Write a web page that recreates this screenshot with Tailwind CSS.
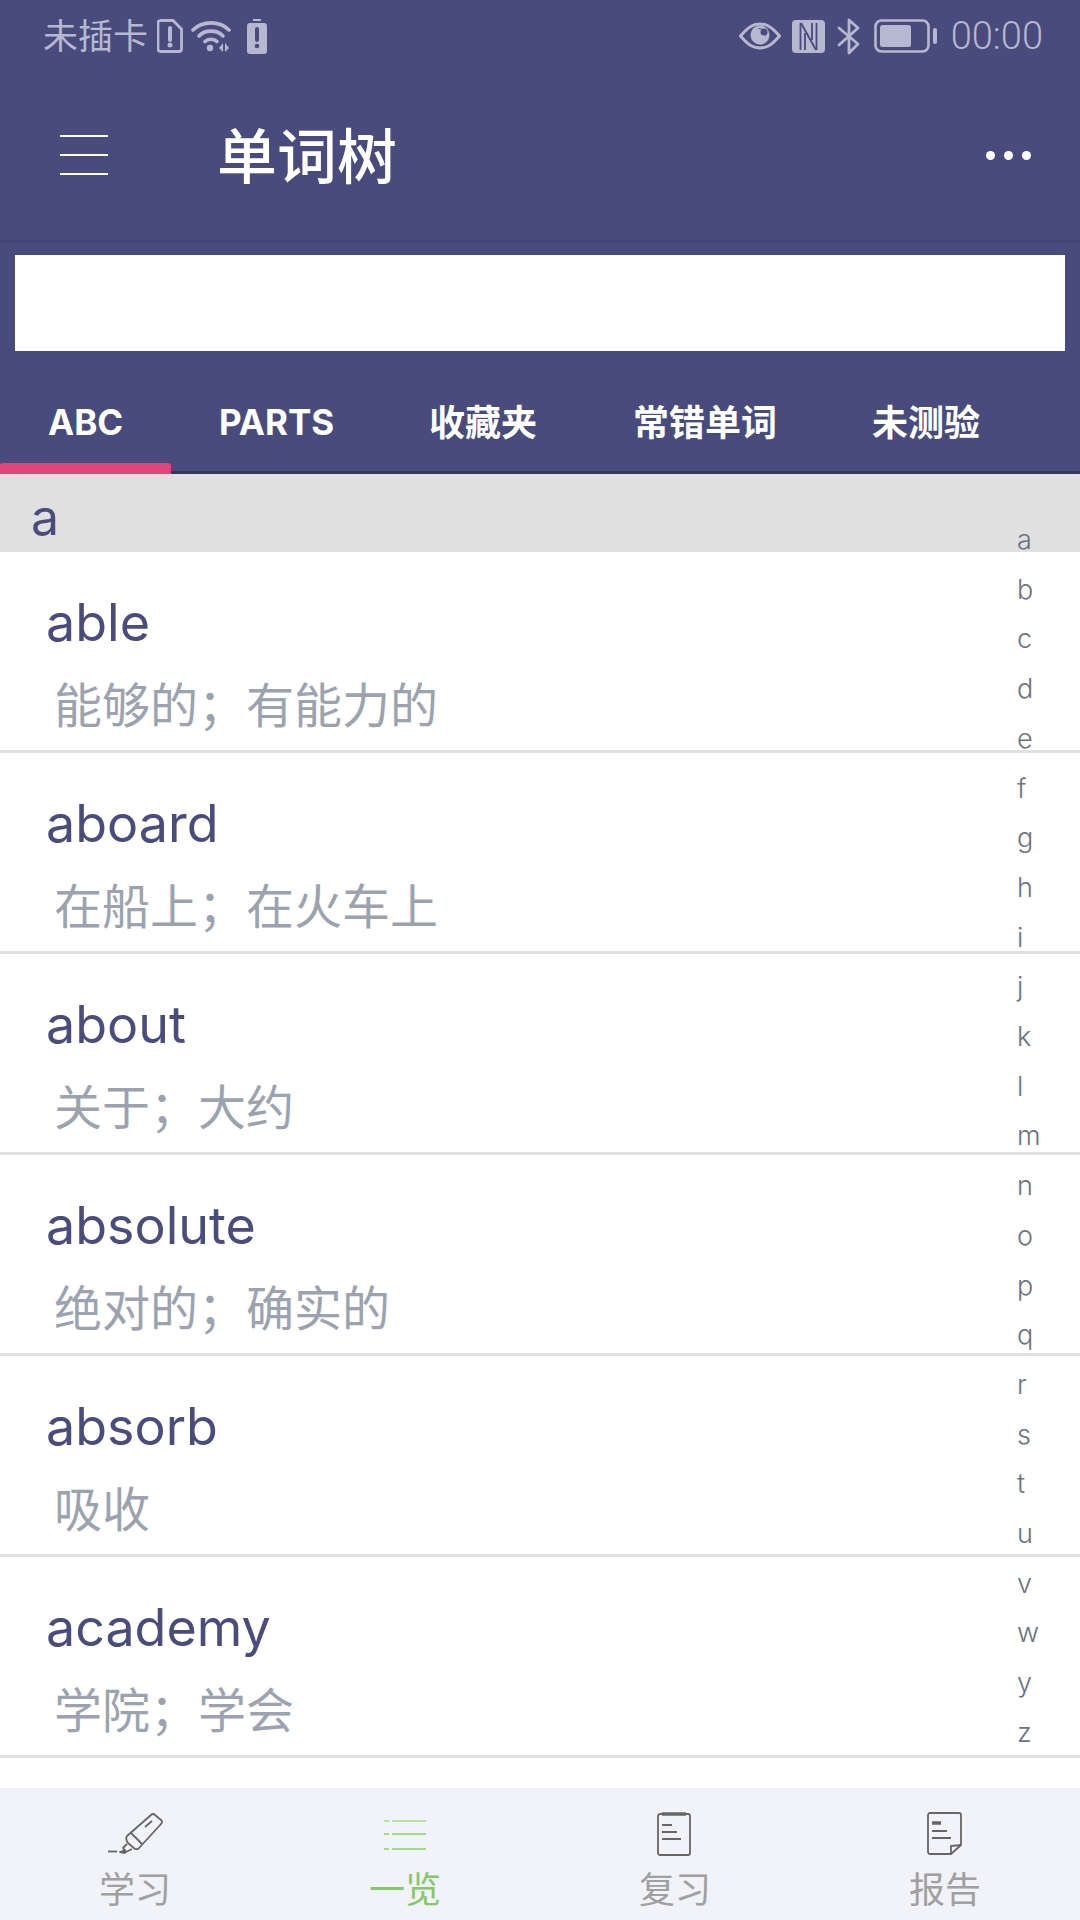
<!DOCTYPE html>
<html><head><meta charset="utf-8"><script src="https://cdn.jsdelivr.net/npm/@tailwindcss/browser@4"></script></head>
<body class="m-0">
<div class="relative w-[1080px] h-[1920px] flex flex-col overflow-hidden bg-white font-['Inter','Noto_Sans_CJK_SC',sans-serif]">
  <div class="bg-[#484b7c] h-[474px] shrink-0 flex flex-col">
    <div class="h-[72px] flex items-center justify-between pl-[43px] pr-[37px] text-[#b6b8cf]">
      <div class="flex items-center">
        <span class="text-[35px] leading-none">未插卡</span>
        <svg class="ml-[9px]" width="26" height="34" viewBox="0 0 26 34" fill="none"><path d="M3 1.500H16L24.500 10V30a2.500 2.500 0 0 1-2.500 2.500H3.500A2.500 2.500 0 0 1 1 30V4a2.500 2.500 0 0 1 2-2.500Z" stroke="currentColor" stroke-width="2.800"/><path d="M13 9v12" stroke="currentColor" stroke-width="4" stroke-linecap="round"/><circle cx="13" cy="26" r="2.500" fill="currentColor"/></svg>
        <svg class="ml-[8px]" width="40" height="34" viewBox="0 0 40 34" fill="none" stroke="currentColor" stroke-linecap="round"><path d="M2 11C11 1.500 29 1.500 38 11" stroke-width="3.600"/><path d="M8 17C14 10.500 26 10.500 32 17" stroke-width="3.600"/><path d="M14 22.500C17 19.500 23 19.500 26 22.500" stroke-width="3.600"/><circle cx="19" cy="29" r="3.200" fill="currentColor" stroke="none"/><path d="M29 30l4-5v9zM35 25l4 5-4 4z" fill="currentColor" stroke="none" transform="translate(-1 -1)"/></svg>
        <svg class="ml-[16px]" width="20" height="35" viewBox="0 0 20 35"><path d="M6 0h8v2H6z" fill="currentColor"/><rect y="4" width="20" height="31" rx="3" fill="currentColor"/><path d="M10 10v11" stroke="#484b7c" stroke-width="4" stroke-linecap="round"/><circle cx="10" cy="27" r="2.300" fill="#484b7c"/></svg>
      </div>
      <div class="flex items-center">
        <svg width="42" height="28" viewBox="0 0 42 28" fill="none"><path d="M1.500 14C10 4 15 2 21 2s11 2 19.500 12C32 24 27 26 21 26S10 24 1.500 14Z" stroke="currentColor" stroke-width="3"/><circle cx="21" cy="13" r="9.500" fill="currentColor"/><path d="M18 7a6 6 0 0 1 8 8 7 7 0 0 0-8-8Z" fill="#484b7c"/><circle cx="25" cy="10" r="3.500" fill="#484b7c"/></svg>
        <svg class="ml-[11px]" width="33" height="33" viewBox="0 0 33 33" fill="none"><rect width="33" height="33" rx="4" fill="currentColor"/><g stroke="#484b7c" stroke-width="1.800"><path d="M8.500 3V30"/><path d="M24.500 3V30"/><path d="M9 3L24 30"/><path d="M13 13V30"/><path d="M20 3V20"/></g></svg>
        <svg class="ml-[12px]" width="24" height="37" viewBox="0 0 24 37" fill="none" stroke="currentColor" stroke-width="2.800" stroke-linejoin="round" stroke-linecap="round"><path d="M2 10L21 26 12 35V2l9 8L2 27"/></svg>
        <svg class="ml-[13px]" width="64" height="34" viewBox="0 0 64 34" fill="none"><rect x="1.500" y="1.500" width="53" height="31" rx="6" stroke="currentColor" stroke-width="2.600"/><rect x="6" y="6" width="31" height="22" rx="2.500" fill="currentColor"/><rect x="59" y="9" width="4" height="16" rx="2" fill="currentColor"/></svg>
        <span class="ml-[13px] text-[38px] leading-none font-['Roboto'] font-light">00:00</span>
      </div>
    </div>
    <div class="h-[171px] relative flex items-center pt-[1px] border-b-[3px] border-[#444775]">
      <div class="absolute left-[60px] top-[63px] w-[48px] h-[40px] flex flex-col justify-between">
        <div class="h-[2px] bg-white"></div><div class="h-[2px] bg-white"></div><div class="h-[2px] bg-white"></div>
      </div>
      <span class="ml-[217px] text-[60px] font-medium text-white leading-none">单词树</span>
      <div class="absolute left-[986px] top-[79px] flex gap-[9px]">
        <div class="w-[9px] h-[9px] rounded-full bg-white"></div><div class="w-[9px] h-[9px] rounded-full bg-white"></div><div class="w-[9px] h-[9px] rounded-full bg-white"></div>
      </div>
    </div>
    <div class="px-[15px] pt-[12px]"><div class="h-[96px] bg-white"></div></div>
    <div class="relative flex-1 text-white font-bold text-[36px] leading-none border-b-[3px] border-[#35375c]">
      <span class="absolute left-[48px] top-[54px] text-[35px]">ABC</span>
      <span class="absolute left-[219px] top-[54px] text-[35px]">PARTS</span>
      <span class="absolute left-[429px] top-[54px]">收藏夹</span>
      <span class="absolute left-[633px] top-[54px]">常错单词</span>
      <span class="absolute left-[872px] top-[54px]">未测验</span>
      <div class="absolute left-0 bottom-[-3px] w-[171px] h-[11px] bg-[#e2457a] rounded-t-[3px]"></div>
    </div>
  </div>
  <div class="h-[78px] bg-[#e0e0e0] shrink-0 flex items-center pl-[31px] text-[#494c7d] text-[50px] leading-none pt-[7px]">a</div>
  <div class="flex-1 flex flex-col overflow-hidden">
    <div class="h-[201px] shrink-0 border-b-[3px] border-[#e0e0e0] pl-[46px] pt-[42px]"><div class="text-[#494c7d] text-[52px] leading-[58px]">able</div><div class="text-[#9ca3af] text-[48px] leading-[52px] mt-[28px] ml-[8px]">能够的；有能力的</div></div>
    <div class="h-[201px] shrink-0 border-b-[3px] border-[#e0e0e0] pl-[46px] pt-[42px]"><div class="text-[#494c7d] text-[52px] leading-[58px]">aboard</div><div class="text-[#9ca3af] text-[48px] leading-[52px] mt-[28px] ml-[8px]">在船上；在火车上</div></div>
    <div class="h-[201px] shrink-0 border-b-[3px] border-[#e0e0e0] pl-[46px] pt-[42px]"><div class="text-[#494c7d] text-[52px] leading-[58px]">about</div><div class="text-[#9ca3af] text-[48px] leading-[52px] mt-[28px] ml-[8px]">关于；大约</div></div>
    <div class="h-[201px] shrink-0 border-b-[3px] border-[#e0e0e0] pl-[46px] pt-[42px]"><div class="text-[#494c7d] text-[52px] leading-[58px]">absolute</div><div class="text-[#9ca3af] text-[48px] leading-[52px] mt-[28px] ml-[8px]">绝对的；确实的</div></div>
    <div class="h-[201px] shrink-0 border-b-[3px] border-[#e0e0e0] pl-[46px] pt-[42px]"><div class="text-[#494c7d] text-[52px] leading-[58px]">absorb</div><div class="text-[#9ca3af] text-[48px] leading-[52px] mt-[28px] ml-[8px]">吸收</div></div>
    <div class="h-[201px] shrink-0 border-b-[3px] border-[#e0e0e0] pl-[46px] pt-[42px]"><div class="text-[#494c7d] text-[52px] leading-[58px]">academy</div><div class="text-[#9ca3af] text-[48px] leading-[52px] mt-[28px] ml-[8px]">学院；学会</div></div>
  </div>
  <div class="h-[132px] bg-[#f1f3f8] shrink-0 grid grid-cols-4 text-[#a0a0a0] text-[36px] leading-none">
    <div class="flex flex-col items-center pt-[25px]">
      <svg width="56" height="42" viewBox="0 0 56 42" fill="none" stroke="#666" stroke-width="1.800" stroke-linejoin="round"><path d="M1 38.500H10"/><path d="M13 39l5-2v3z" fill="#666"/><path d="M20 31L16 35 19 39 25 36"/><path d="M20 23L44 2Q46 0 48 2L54 7Q56 9 54 11L33 34Q31 37 28 36L21 30Q18 26 20 23Z"/><path d="M24 20L35 31"/><path d="M38 14L45 8"/></svg>
      <span class="mt-[17px]">学习</span>
    </div>
    <div class="flex flex-col items-center pt-[25px] text-[#85c86c]">
      <svg width="42" height="42" viewBox="0 0 42 42" fill="none" stroke-width="2"><path d="M0 8h5M8 8h34" stroke="#b5e3a2"/><path d="M0 21h5M8 21h34M0 36h5M8 36h34" stroke="#a0da88"/></svg>
      <span class="mt-[17px]">一览</span>
    </div>
    <div class="flex flex-col items-center pt-[24px]">
      <svg width="36" height="44" viewBox="0 0 36 44" fill="none" stroke="#666" stroke-width="1.800"><rect x="1" y="2" width="32" height="41" rx="2"/><path d="M5 2h24" stroke-width="3.500"/><path d="M5 13h10M5 20h15M5 27h19"/></svg>
      <span class="mt-[16px]">复习</span>
    </div>
    <div class="flex flex-col items-center pt-[24px]">
      <svg width="36" height="44" viewBox="0 0 36 44" fill="none" stroke="#666" stroke-width="1.800" stroke-linejoin="round"><path d="M3 1h29a2 2 0 0 1 2 2v30L24 42H3a2 2 0 0 1-2-2V3a2 2 0 0 1 2-2Z"/><path d="M24 42v-8l10-1"/><path d="M5 11h9" stroke-width="3.500"/><path d="M5 19h15M5 26h19"/></svg>
      <span class="mt-[16px]">报告</span>
    </div>
  </div>
  <div class="absolute left-[1017px] top-[515px] flex flex-col text-[#6b7280] text-[27px] leading-[49.7px] font-light items-start">
    <span>a</span><span>b</span><span>c</span><span>d</span><span>e</span><span>f</span><span>g</span><span>h</span><span>i</span><span>j</span><span>k</span><span>l</span><span>m</span><span>n</span><span>o</span><span>p</span><span>q</span><span>r</span><span>s</span><span>t</span><span>u</span><span>v</span><span>w</span><span>y</span><span>z</span>
  </div>
</div>
</body></html>
